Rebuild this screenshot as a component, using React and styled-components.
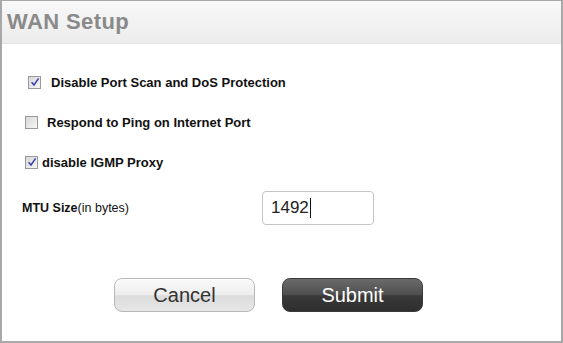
import styled, { createGlobalStyle } from 'styled-components';

const Global = createGlobalStyle`
  html, body {
    margin: 0;
    padding: 0;
    background: #ffffff;
  }
  body {
    font-family: "Liberation Sans", Arial, sans-serif;
  }
`;

const options = [
  { label: 'Disable Port Scan and DoS Protection', checked: true, indent: 4, space: 10 },
  { label: 'Respond to Ping on Internet Port', checked: false, indent: 1, space: 9 },
  { label: 'disable IGMP Proxy', checked: true, indent: 1, space: 4 },
];

const App = () => {
  return (
    <>
      <Global />
      <Panel>
        <Header>
          <Title>WAN Setup</Title>
        </Header>
        <Body>
          <Options>
            {options.map((o) => (
              <OptionRow key={o.label} $indent={o.indent} $space={o.space}>
                <Box>
                  {o.checked && (
                    <svg width="10" height="10" viewBox="0 0 10 10">
                      <path d="M1.6 5.2 L4 8 L8.6 1.4" fill="none" stroke="#3b3fa8" strokeWidth="1.5" />
                    </svg>
                  )}
                </Box>
                <OptionLabel>{o.label}</OptionLabel>
              </OptionRow>
            ))}
          </Options>
          <MtuRow>
            <MtuLabel>
              <strong>MTU Size</strong>(in bytes)
            </MtuLabel>
            <MtuInput>
              1492<Caret />
            </MtuInput>
          </MtuRow>
          <Buttons>
            <Button>Cancel</Button>
            <Button $primary>Submit</Button>
          </Buttons>
        </Body>
      </Panel>
    </>
  );
};

const Panel = styled.div`
  box-sizing: border-box;
  width: 563px;
  height: 343px;
  border-top: 1px solid #a8a8a8;
  border-left: 2px solid #a8a8a8;
  border-right: 2px solid #a8a8a8;
  border-bottom: 2px solid #a8a8a8;
  display: flex;
  flex-direction: column;
  background: #ffffff;
`;

const Header = styled.div`
  height: 42px;
  display: flex;
  align-items: center;
  padding-left: 5px;
  background: linear-gradient(#f8f8f8, #ececec);
  border-bottom: 1px solid #e4e4e4;
`;

const Title = styled.h1`
  margin: 0;
  font-size: 22px;
  font-weight: bold;
  color: #8a8a8a;
  letter-spacing: 0.4px;
`;

const Body = styled.div`
  display: flex;
  flex-direction: column;
  padding-top: 28px;
`;

const Options = styled.div`
  display: flex;
  flex-direction: column;
  gap: 20px;
  padding-left: 22px;
`;

const OptionRow = styled.label`
  display: flex;
  align-items: center;
  height: 20px;
  gap: ${(p) => p.$space}px;
  padding-left: ${(p) => p.$indent}px;
`;

const Box = styled.span`
  box-sizing: border-box;
  width: 13px;
  height: 13px;
  border: 1px solid #9a9a9a;
  background: linear-gradient(135deg, #d8d8d8, #f6f6f6);
  display: flex;
  align-items: center;
  justify-content: center;
`;

const OptionLabel = styled.span`
  font-size: 13px;
  font-weight: bold;
  color: #111111;
`;

const MtuRow = styled.div`
  display: flex;
  align-items: center;
  margin-top: 19px;
  padding-left: 20px;
  height: 34px;
`;

const MtuLabel = styled.span`
  width: 240px;
  font-size: 12.5px;
  color: #111111;

  strong {
    font-weight: bold;
  }
`;

const MtuInput = styled.div`
  box-sizing: border-box;
  width: 112px;
  height: 34px;
  border: 1px solid #c4c4c4;
  border-radius: 4px;
  display: flex;
  align-items: center;
  padding-left: 8px;
  font-size: 17px;
  color: #222222;
`;

const Caret = styled.span`
  display: inline-block;
  width: 1px;
  height: 20px;
  background: #111111;
  margin-left: 1px;
`;

const Buttons = styled.div`
  display: flex;
  gap: 27px;
  padding-left: 112px;
  margin-top: 53px;
`;

const Button = styled.button`
  box-sizing: border-box;
  width: 141px;
  height: 34px;
  border-radius: 8px;
  font-family: "Liberation Sans", Arial, sans-serif;
  font-size: 20px;
  cursor: pointer;
  border: 1px solid ${(p) => (p.$primary ? '#3a3a3a' : '#b8b8b8')};
  color: ${(p) => (p.$primary ? '#ffffff' : '#333333')};
  background: ${(p) =>
    p.$primary
      ? 'linear-gradient(#6a6a6a, #4e4e4e 50%, #3a3a3a 52%, #2e2e2e)'
      : 'linear-gradient(#fafafa, #ededed 50%, #dcdcdc 52%, #e6e6e6)'};
  box-shadow: ${(p) => (p.$primary ? 'none' : 'inset 0 1px 0 #ffffff')};
`;

export default App;
